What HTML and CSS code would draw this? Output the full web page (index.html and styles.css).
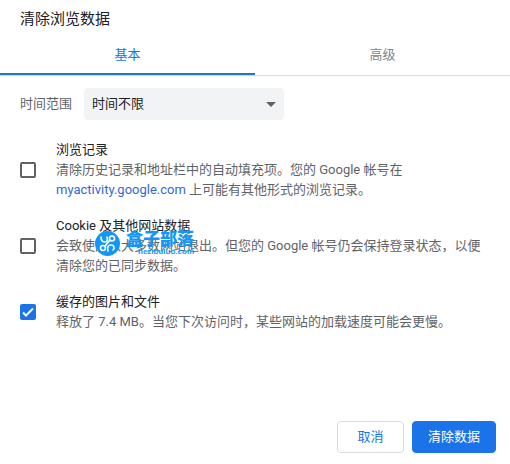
FILE: index.html
```
<!DOCTYPE html>
<html lang="zh-CN">
<head>
    <meta charset="UTF-8">
    <meta name="viewport" content="width=device-width, initial-scale=1.0">
    <title>清除浏览数据</title>
    <link rel="stylesheet" href="styles.css">
</head>
<body>
    <form class="dialog">
        <h1>清除浏览数据</h1>
        <div class="tabs" role="tablist">
            <button type="button" class="tab active" role="tab" aria-selected="true">基本</button>
            <button type="button" class="tab" role="tab" aria-selected="false">高级</button>
        </div>
        <div class="content">
            <div class="range">
                <label for="time-range">时间范围</label>
                <div class="select-wrap">
                    <select id="time-range">
                        <option>时间不限</option>
                    </select>
                    <svg class="arrow" width="10" height="5" viewBox="0 0 10 5"><path d="M0 0h10L5 5z" fill="#5f6368"/></svg>
                </div>
            </div>
            <div class="item">
                <input type="checkbox" id="history">
                <div class="text">
                    <label for="history">浏览记录</label>
                    <p>清除历史记录和地址栏中的自动填充项。您的 Google 帐号在 <a href="https://myactivity.google.com">myactivity.google.com</a> 上可能有其他形式的浏览记录。</p>
                </div>
            </div>
            <div class="item">
                <input type="checkbox" id="cookies">
                <div class="text">
                    <label for="cookies">Cookie 及其他网站数据</label>
                    <p>会致使您从大多数网站退出。但您的 Google 帐号仍会保持登录状态，以便清除您的已同步数据。</p>
                </div>
                <div class="watermark">
                    <svg width="25" height="25" viewBox="0 0 25 25">
                        <circle cx="12.5" cy="12.5" r="12.5" fill="#1296fa"/>
                        <g fill="none" stroke="#fff" stroke-width="1.6" stroke-linecap="round">
                            <path d="M6 6c0 4 2 5 4 5s3-2 2-5"/>
                            <path d="M10 15L15 9"/>
                            <circle cx="17" cy="7.500" r="2.500"/>
                            <circle cx="8" cy="17" r="2.500"/>
                            <path d="M13 20c-1-4 0-6 3-6s4 3 2 5"/>
                        </g>
                    </svg>
                    <div class="brand">
                        <span class="brand-name">盒子部落</span>
                        <span class="brand-url">hezibuluo.com</span>
                    </div>
                </div>
            </div>
            <div class="item">
                <input type="checkbox" id="cache" checked>
                <div class="text">
                    <label for="cache">缓存的图片和文件</label>
                    <p>释放了 7.4 MB。当您下次访问时，某些网站的加载速度可能会更慢。</p>
                </div>
            </div>
        </div>
        <div class="footer">
            <button type="button" class="btn">取消</button>
            <button type="submit" class="btn primary">清除数据</button>
        </div>
    </form>
</body>
</html>
```
FILE: styles.css
```
* {
  box-sizing: border-box;
}
body {
  margin: 0;
  background: #fff;
  color: #202124;
  font-family: Roboto, "Noto Sans CJK SC", sans-serif;
  font-size: 13px;
  line-height: 20px;
}
button,
select {
  font: inherit;
}
.dialog {
  display: flex;
  flex-direction: column;
  min-height: 100vh;
}
h1 {
  margin: 0;
  padding: 9px 20px 5px;
  font-size: 15px;
  font-weight: normal;
  line-height: 20px;
}
.tabs {
  display: flex;
  height: 42px;
  border-bottom: 1px solid #dadce0;
}
.tab {
  flex: 1;
  padding: 2px 0 0;
  border: none;
  border-bottom: 2px solid transparent;
  background: none;
  color: #80868b;
  cursor: pointer;
}
.tab.active {
  border-bottom-color: #1a73e8;
  color: #1a73e8;
}
.content {
  flex: 1;
  padding: 12px 20px;
}
.range {
  display: flex;
  align-items: center;
  gap: 12px;
  margin-bottom: 20px;
  color: #5f6368;
}
.select-wrap {
  position: relative;
  width: 200px;
}
select {
  width: 100%;
  height: 32px;
  padding: 0 24px 0 8px;
  border: none;
  border-radius: 4px;
  background: #f1f3f4;
  color: #202124;
  appearance: none;
}
.arrow {
  position: absolute;
  right: 8px;
  top: 14px;
  pointer-events: none;
}
.item {
  position: relative;
  display: flex;
  align-items: center;
  gap: 20px;
  margin-bottom: 16px;
}
.item input {
  flex: none;
  width: 16px;
  height: 16px;
  margin: 0;
  border: 2px solid #5f6368;
  border-radius: 2px;
  appearance: none;
}
.item input:checked {
  border-color: #1a73e8;
  background: #1a73e8 url("data:image/svg+xml,%3Csvg xmlns='http://www.w3.org/2000/svg' viewBox='0 0 12 12'%3E%3Cpath d='M1 6.500l3 3L11 2.500' fill='none' stroke='white' stroke-width='2'/%3E%3C/svg%3E") center / 12px no-repeat;
}
.item label {
  display: block;
}
.item p {
  margin: 0;
  color: #5f6368;
}
a {
  color: #3367d6;
  text-decoration: none;
}
/* Site logo laid over the text */
.watermark {
  position: absolute;
  left: 75px;
  top: 15px;
  display: flex;
  gap: 6px;
  color: #1296fa;
  pointer-events: none;
}
.brand {
  display: flex;
  flex-direction: column;
  align-items: flex-end;
}
.brand-name {
  font-size: 17px;
  font-weight: 900;
  line-height: 17px;
}
.brand-url {
  font-family: "Liberation Sans", sans-serif;
  font-size: 8px;
  font-weight: bold;
  line-height: 8px;
}
.footer {
  display: flex;
  justify-content: flex-end;
  gap: 8px;
  padding: 0 14px 11px;
}
.btn {
  min-width: 67px;
  height: 32px;
  padding: 0 15px;
  border: 1px solid #dadce0;
  border-radius: 4px;
  background: #fff;
  color: #1a73e8;
  cursor: pointer;
}
.btn.primary {
  border-color: #1a73e8;
  background: #1a73e8;
  color: #fff;
}
```
